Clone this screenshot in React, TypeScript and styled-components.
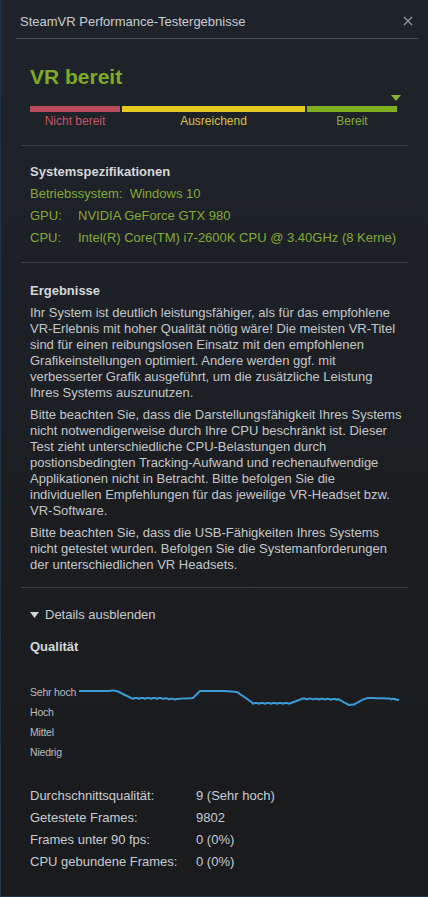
import {Fragment, FunctionComponent} from 'react';
import styled, {createGlobalStyle} from 'styled-components';

const GlobalStyle = createGlobalStyle`
  html, body {
    margin: 0;
    padding: 0;
    background: #1a1b1d;
  }
  * {
    box-sizing: border-box;
  }
`;

const Window = styled.div`
  width: 428px;
  height: 897px;
  display: flex;
  flex-direction: column;
  background: linear-gradient(180deg, #1f242c 0%, #1d2127 30%, #1b1d20 60%, #1a1b1d 100%);
  border-left: 1px solid #22344a;
  border-bottom: 1px solid #22344a;
  font-family: 'Liberation Sans', Arial, sans-serif;
  font-size: 13px;
  color: #c4c7ca;
  overflow: hidden;
`;

const TitleBar = styled.header`
  height: 39px;
  margin: 0 10px 0 15px;
  padding: 4px 0 0 4px;
  display: flex;
  align-items: center;
  justify-content: space-between;
  border-bottom: 1px solid #4a5058;
`;

const Title = styled.h1`
  margin: 0;
  font-size: 13px;
  font-weight: normal;
  color: #c9cdd1;
`;

const Close = styled.button`
  width: 16px;
  height: 16px;
  padding: 0;
  margin-right: 2px;
  border: 0;
  background: none;
  display: flex;
  align-items: center;
  justify-content: center;
`;

const Body = styled.main`
  padding: 0 20px;
  display: flex;
  flex-direction: column;
`;

const Section = styled.section<{$top: number; $bottom: number; $last?: boolean}>`
  padding: ${(p) => p.$top}px 0 ${(p) => p.$bottom}px 9px;
  border-bottom: ${(p) => (p.$last ? 'none' : '1px solid #3c4046')};
`;

const Status = styled.h2`
  margin: 0;
  font-size: 21px;
  line-height: 26px;
  font-weight: bold;
  color: #7fab25;
`;

const MarkerRow = styled.div`
  height: 6px;
  margin: 5px 0 5px;
  width: 369px;
  display: flex;
  justify-content: flex-end;
`;

const Marker = styled.div`
  width: 0;
  height: 0;
  margin-right: -2px;
  border-left: 5px solid transparent;
  border-right: 5px solid transparent;
  border-top: 6px solid #86b22a;
`;

const Scale = styled.div`
  display: grid;
  grid-template-columns: 90px 183px 90px;
  column-gap: 2px;
  width: 367px;
`;

const Segment = styled.div<{$color: string}>`
  height: 6px;
  background: ${(p) => p.$color};
`;

const SegmentLabel = styled.div<{$color: string}>`
  margin-top: 2px;
  font-size: 12px;
  line-height: 14px;
  text-align: center;
  color: ${(p) => p.$color};
`;

const Heading = styled.h3<{$gap: number}>`
  margin: 0 0 ${(p) => p.$gap}px;
  font-size: 13px;
  line-height: 16px;
  font-weight: bold;
  color: #d5d8db;
`;

const SpecGrid = styled.dl`
  margin: 0;
  display: grid;
  grid-template-columns: 48px 1fr;
  color: #84aa32;
  line-height: 22px;
`;

const SpecKey = styled.dt`
  margin: 0;
`;

const SpecValue = styled.dd`
  margin: 0;
`;

const SpecFull = styled.div`
  grid-column: 1 / 3;
`;

const Paragraph = styled.p`
  margin: 0 0 6px;
  line-height: 16px;
  width: 372px;
  &:last-child {
    margin-bottom: 0;
  }
`;

const Toggle = styled.div`
  display: flex;
  align-items: center;
  gap: 6px;
  line-height: 16px;
  margin-bottom: 16px;
  color: #c9cccf;
`;

const Chart = styled.div`
  display: grid;
  grid-template-columns: 49px 321px;
  grid-template-rows: repeat(4, 20px);
  margin: 27px 0 23px;
`;

const ChartLabel = styled.div`
  font-size: 10.5px;
  line-height: 20px;
  white-space: nowrap;
  letter-spacing: -0.2px;
  color: #b8bcc0;
  grid-column: 1;
`;

const ChartSvg = styled.svg`
  grid-column: 2;
  grid-row: 1 / 5;
`;

const Stats = styled.dl`
  margin: 0;
  display: grid;
  grid-template-columns: 166px 1fr;
  line-height: 22px;
  color: #c9ccd0;
`;

const StatKey = styled.dt`
  margin: 0;
`;

const StatValue = styled.dd`
  margin: 0;
`;

const specs = [
  ['GPU:', 'NVIDIA GeForce GTX 980'],
  ['CPU:', 'Intel(R) Core(TM) i7-2600K CPU @ 3.40GHz (8 Kerne)'],
];

const stats = [
  ['Durchschnittsqualität:', '9 (Sehr hoch)'],
  ['Getestete Frames:', '9802'],
  ['Frames unter 90 fps:', '0 (0%)'],
  ['CPU gebundene Frames:', '0 (0%)'],
];

// key points of the quality curve, in page coordinates
const curveKeys: [number, number, boolean][] = [
  [78, 690, false],
  [108, 690, false],
  [113, 689.5, false],
  [117, 690.5, false],
  [130, 697, true],
  [160, 697, true],
  [175, 698, true],
  [192, 697, false],
  [199, 690, false],
  [225, 690, false],
  [236, 691, false],
  [252, 702, true],
  [290, 702, false],
  [302, 697.5, true],
  [337, 698, false],
  [348, 704, false],
  [353, 703.5, false],
  [362, 698.5, false],
  [367, 697, true],
  [390, 697.5, true],
  [398, 698.5, false],
];

const buildCurve = () => {
  const pts: string[] = [];
  for (let i = 0; i < curveKeys.length - 1; i++) {
    const [x1, y1, noisy] = curveKeys[i];
    const [x2, y2] = curveKeys[i + 1];
    for (let x = x1; x < x2; x += 2) {
      const t = (x - x1) / (x2 - x1);
      let y = y1 + (y2 - y1) * t;
      if (noisy && (x / 2) % 3 === 0) y += 0.8;
      pts.push(`${(x - 78).toFixed(1)},${(y - 681).toFixed(1)}`);
    }
  }
  const [lx, ly] = curveKeys[curveKeys.length - 1];
  pts.push(`${lx - 78},${ly - 681}`);
  return 'M' + pts.join(' L');
};

const App: FunctionComponent = () => {
  return (
    <>
      <GlobalStyle />
      <Window>
        <TitleBar>
          <Title>SteamVR Performance-Testergebnisse</Title>
          <Close aria-label="Schließen">
            <svg width="10" height="10" viewBox="0 0 10 10">
              <path d="M1 1 L9 9 M9 1 L1 9" stroke="#8d9299" strokeWidth="1.3" />
            </svg>
          </Close>
        </TitleBar>
        <Body>
          <Section $top={25} $bottom={17}>
            <Status>VR bereit</Status>
            <MarkerRow>
              <Marker />
            </MarkerRow>
            <Scale>
              <Segment $color="#b84a5b" />
              <Segment $color="#e3c91e" />
              <Segment $color="#7fb020" />
              <SegmentLabel $color="#c25566">Nicht bereit</SegmentLabel>
              <SegmentLabel $color="#dcc23a">Ausreichend</SegmentLabel>
              <SegmentLabel $color="#86ac30">Bereit</SegmentLabel>
            </Scale>
          </Section>

          <Section $top={18} $bottom={13}>
            <Heading $gap={3}>Systemspezifikationen</Heading>
            <SpecGrid>
              <SpecFull>Betriebssystem:&nbsp; Windows 10</SpecFull>
              {specs.map(([k, v]) => (
                <Fragment key={k}>
                  <SpecKey>{k}</SpecKey>
                  <SpecValue>{v}</SpecValue>
                </Fragment>
              ))}
            </SpecGrid>
          </Section>

          <Section $top={20} $bottom={14}>
            <Heading $gap={6}>Ergebnisse</Heading>
            <Paragraph>
              Ihr System ist deutlich leistungsfähiger, als für das empfohlene VR-Erlebnis mit hoher Qualität nötig
              wäre! Die meisten VR-Titel sind für einen reibungslosen Einsatz mit den empfohlenen Grafikeinstellungen
              optimiert. Andere werden ggf. mit verbesserter Grafik ausgeführt, um die zusätzliche Leistung Ihres
              Systems auszunutzen.
            </Paragraph>
            <Paragraph>
              Bitte beachten Sie, dass die Darstellungsfähigkeit Ihres Systems nicht notwendigerweise durch Ihre CPU
              beschränkt ist. Dieser Test zieht unterschiedliche CPU-Belastungen durch postionsbedingten
              Tracking-Aufwand und rechenaufwendige Applikationen nicht in Betracht. Bitte befolgen Sie die
              individuellen Empfehlungen für das jeweilige VR-Headset bzw. VR-Software.
            </Paragraph>
            <Paragraph>
              Bitte beachten Sie, dass die USB-Fähigkeiten Ihres Systems nicht getestet wurden. Befolgen Sie die
              Systemanforderungen der unterschiedlichen VR Headsets.
            </Paragraph>
          </Section>

          <Section $top={19} $bottom={0} $last>
            <Toggle>
              <svg width="9" height="6" viewBox="0 0 9 6">
                <path d="M0 0 H9 L4.5 6 Z" fill="#d0d3d6" />
              </svg>
              Details ausblenden
            </Toggle>
            <Heading $gap={0}>Qualität</Heading>
            <Chart>
              <ChartLabel>Sehr hoch</ChartLabel>
              <ChartSvg width="321" height="80" viewBox="0 0 321 80">
                <path d={buildCurve()} fill="none" stroke="#3a9bd8" strokeWidth="2" strokeLinejoin="round" />
              </ChartSvg>
              <ChartLabel>Hoch</ChartLabel>
              <ChartLabel>Mittel</ChartLabel>
              <ChartLabel>Niedrig</ChartLabel>
            </Chart>
            <Stats>
              {stats.map(([k, v]) => (
                <Fragment key={k}>
                  <StatKey>{k}</StatKey>
                  <StatValue>{v}</StatValue>
                </Fragment>
              ))}
            </Stats>
          </Section>
        </Body>
      </Window>
    </>
  );
};

export default App;
